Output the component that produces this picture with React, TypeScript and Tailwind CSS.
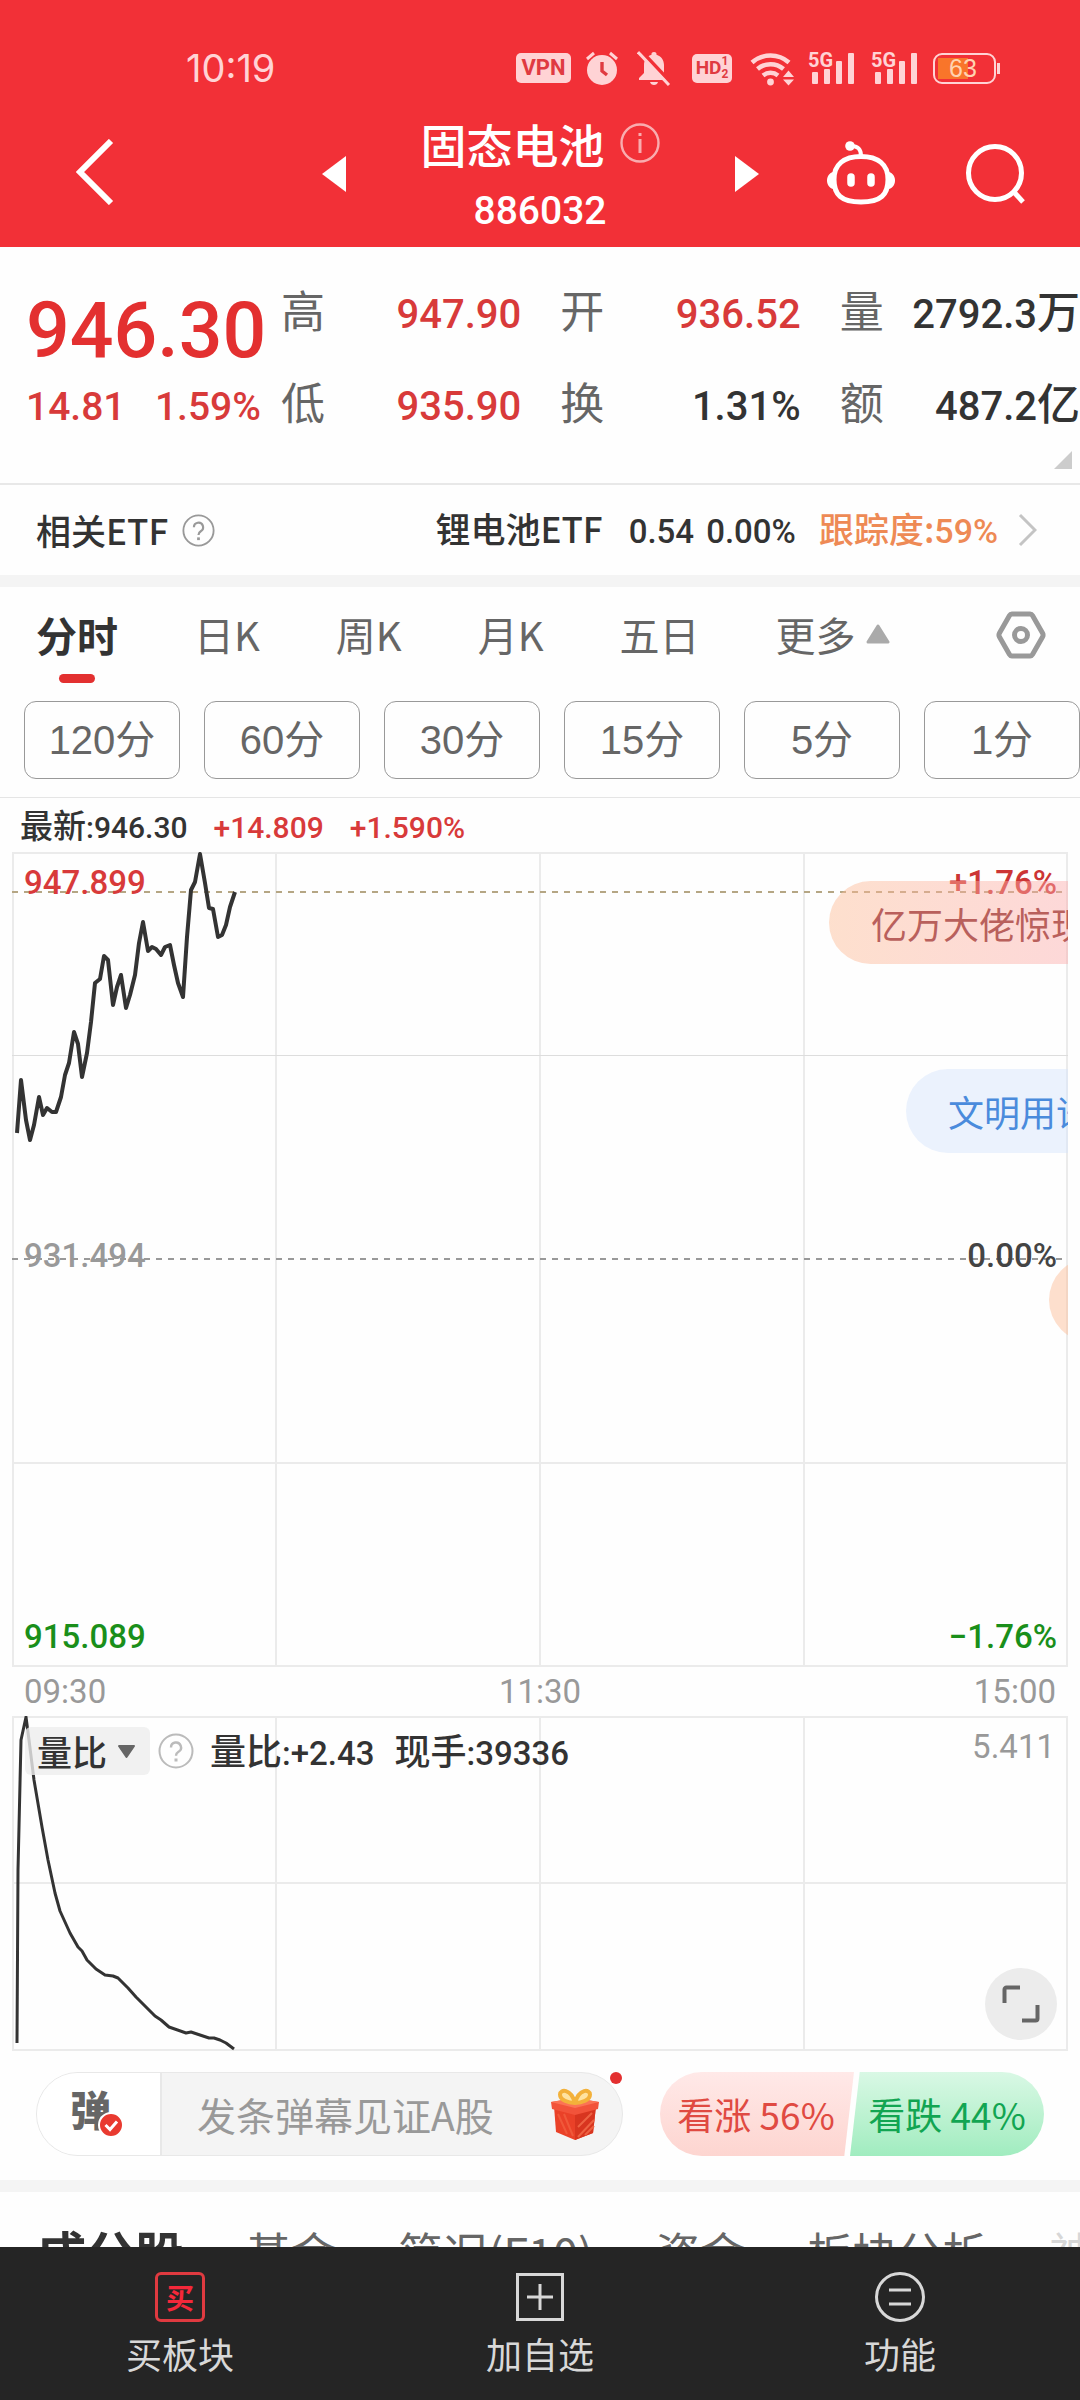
import React from "react";

const NUM = "font-['Roboto','Noto_Sans_CJK_SC',sans-serif]";

const PRICE_LINE =
  "5,281 9,228 14,268 18,288 22,273 27,245 31,263 35,256 40,260 44,260 49,245 53,223 57,211 62,180 66,192 70,225 75,201 79,170 83,131 88,127 92,104 96,108 101,153 105,135 109,123 114,156 118,143 123,123 127,91 131,70 136,99 140,95 144,97 149,103 153,95 158,93 162,113 166,131 171,145 175,85 179,38 183,30 188,2 193,31 197,56 201,57 206,85 210,83 214,73 218,55 223,40";

const VOLUME_LINE =
  "5,327 6,154 9,24 14,1 17,24 22,64 30,111 36,144 43,177 48,195 53,206 58,217 66,231 70,235 75,244 84,253 93,259 101,260 106,262 116,272 124,281 133,290 143,300 149,304 157,311 174,317 179,316 185,318 191,320 197,322 202,322 208,324 214,327 222,333";

const STATS = [
  [
    { label: "高", value: "947.90", unit: "", red: true },
    { label: "低", value: "935.90", unit: "", red: true },
  ],
  [
    { label: "开", value: "936.52", unit: "", red: true },
    { label: "换", value: "1.31%", unit: "", red: false },
  ],
  [
    { label: "量", value: "2792.3", unit: "万", red: false },
    { label: "额", value: "487.2", unit: "亿", red: false },
  ],
];

function Signal() {
  return (
    <svg width="48" height="46" viewBox="0 -6 48 46" fill="currentColor" aria-hidden="true">
      <text x="0" y="16" fontSize="20" fontWeight="700" fontFamily="Roboto, sans-serif">
        5G
      </text>
      <rect x="4" y="21" width="6" height="12" rx="1" />
      <rect x="16" y="18" width="6" height="15" rx="1" />
      <rect x="28" y="10" width="6" height="23" rx="1" />
      <rect x="40" y="2" width="6" height="31" rx="1" />
    </svg>
  );
}

function StatusBar() {
  return (
    <div className="flex h-[91px] items-end justify-between pr-[80px] pl-[186px] text-[#ffd3d5]">
      <span className="font-['Inter',sans-serif] text-[38px] leading-[46px]">10:19</span>
      <div className="flex h-[46px] items-center">
        <span className="flex h-[30px] w-[55px] items-center justify-center rounded-[5px] bg-[#ffd3d5] font-['Roboto',sans-serif] text-[22px] leading-[30px] font-bold text-[#e03a41]">
          VPN
        </span>
        <svg className="ml-[14px]" width="34" height="36" viewBox="0 0 34 36" fill="none" aria-hidden="true">
          <circle cx="17" cy="20" r="15" fill="currentColor" />
          <path d="M2 9 9 3M32 9 25 3" stroke="currentColor" strokeWidth="3" />
          <path d="M17 12v9l5 4" stroke="#e03a41" strokeWidth="3.4" />
        </svg>
        <svg className="ml-[18px]" width="34" height="36" viewBox="0 0 34 36" fill="none" aria-hidden="true">
          <path
            d="M17 2a2.500 2.500 0 0 0-2.500 2.800C9.500 6.300 7 10.200 7 15v8l-5 5v2h29v-2l-4-4v-9c0-4.800-2.800-8.700-7.500-10.200A2.500 2.500 0 0 0 17 2Z"
            fill="currentColor"
          />
          <path d="M13 32h8c-.5 2-2 3-4 3s-3.500-1-4-3Z" fill="currentColor" />
          <path d="M4 1 35 34" stroke="#f23037" strokeWidth="4" />
          <path d="M1 2 32 35" stroke="currentColor" strokeWidth="3" />
        </svg>
        <span className="ml-[21px] flex h-[29px] w-[40px] items-center justify-center rounded-[5px] bg-[#ffd3d5] font-['Roboto',sans-serif] text-[19px] leading-[28px] font-bold text-[#e03a41]">
          HD
          <span className="flex flex-col text-[12px] leading-[13px]">
            <span>1</span>
            <span>2</span>
          </span>
        </span>
        <svg className="ml-[18px]" width="46" height="36" viewBox="0 0 46 36" fill="none" aria-hidden="true">
          <g stroke="currentColor" strokeWidth="4.500">
            <path d="M2 12.500a28 28 0 0 1 37 0" />
            <path d="M7.500 19a20 20 0 0 1 26 0" />
            <path d="M13 25.500a12 12 0 0 1 15 0" />
          </g>
          <circle cx="20.500" cy="32" r="3.400" fill="currentColor" />
          <path d="M33 27h11l-5.500-6.500zM33 29.500h11l-5.500 6z" fill="currentColor" />
        </svg>
        <div className="ml-[12px] flex gap-[15px]">
          <Signal />
          <Signal />
        </div>
        <span className="ml-[14px] flex h-[31px] w-[63px] items-center rounded-[9px] border-[2px] border-[#ffd3d5] bg-[linear-gradient(90deg,#f9752a_0_56%,transparent_56%)] bg-[length:53px_21px] bg-[position:3px_3px] bg-no-repeat pl-[14px] font-['Liberation_Sans',sans-serif] text-[25px] leading-[27px] text-[#ffd3b0]">
          63
        </span>
        <span className="ml-[1px] h-[11px] w-[3px] bg-[#ffd3d5]" />
      </div>
    </div>
  );
}

function Header() {
  return (
    <header className="h-[247px] shrink-0 bg-[#f23037] text-white">
      <StatusBar />
      <div className="grid grid-cols-[1fr_437px_1fr] items-start pt-[22px]">
        <button type="button" aria-label="返回" className="mt-[26px] ml-[76px] w-[38px]">
          <svg width="38" height="66" viewBox="0 0 38 66" fill="none">
            <path d="M35 2 4 33l31 31" stroke="#fff" strokeWidth="6" />
          </svg>
        </button>
        <div className="flex items-start justify-between">
          <button type="button" aria-label="上一个" className="mt-[43px]">
            <svg width="24" height="36" viewBox="0 0 24 36">
              <path d="M24 0v36L0 18z" fill="#fff" />
            </svg>
          </button>
          <div className="flex flex-col items-center">
            <h1 className="flex items-center gap-[15px] text-[46px] leading-[60px] font-medium">
              固态电池
              <svg width="40" height="40" viewBox="0 0 40 40" fill="none" opacity="0.6" aria-hidden="true">
                <circle cx="20" cy="20" r="18.500" stroke="#fff" strokeWidth="2.400" />
                <path d="M20 16v14M20 10v3" stroke="#fff" strokeWidth="3" />
              </svg>
            </h1>
            <span className={`${NUM} mt-[10px] text-[39px] leading-[56px] font-medium`}>886032</span>
          </div>
          <button type="button" aria-label="下一个" className="mt-[43px]">
            <svg width="24" height="36" viewBox="0 0 24 36">
              <path d="M0 0v36l24-18z" fill="#fff" />
            </svg>
          </button>
        </div>
        <div className="mt-[28px] flex items-start justify-end gap-[68px] pr-[53px]">
          <button type="button" aria-label="智能助手">
            <svg width="72" height="64" viewBox="0 0 72 64" fill="none">
              <path
                d="M36 15.500c17 0 27 8 27 23s-7 22.500-27 22.500S9 53.500 9 38.500s10-23 27-23Z"
                stroke="#fff"
                strokeWidth="5"
              />
              <path d="M36 15c0-7-3-10-10-10" stroke="#fff" strokeWidth="4" />
              <circle cx="25" cy="5" r="4.800" fill="#fff" />
              <path d="M8 31c-8 2-8 15 0 17ZM64 31c8 2 8 15 0 17Z" fill="#fff" />
              <path d="M26 36v6M46 36v6" stroke="#fff" strokeWidth="7.500" strokeLinecap="round" />
            </svg>
          </button>
          <button type="button" aria-label="搜索" className="mt-[2px]">
            <svg width="62" height="62" viewBox="0 0 62 62" fill="none">
              <circle cx="30" cy="30" r="26.500" stroke="#fff" strokeWidth="5" />
              <path d="m48 48 10 11" stroke="#fff" strokeWidth="5" />
            </svg>
          </button>
        </div>
      </div>
    </header>
  );
}

function Quote() {
  return (
    <section className="relative flex h-[238px] shrink-0 items-start border-b-2 border-[#e8e8e8] pt-[34px]">
      <div className={`${NUM} w-[281px] shrink-0 pl-[26px] font-medium text-[#e33030]`}>
        <div className="text-[77px] leading-[100px]">946.30</div>
        <div className="flex justify-between pr-[20px] text-[39px] leading-[52px] text-[#d83a3a]">
          <span>14.81</span>
          <span>1.59%</span>
        </div>
      </div>
      <div className="grid flex-1 grid-cols-3 gap-[39px]">
        {STATS.map((column, i) => (
          <dl key={i} className="flex flex-col gap-[32px]">
            {column.map((s) => (
              <div key={s.label} className="flex h-[60px] items-baseline justify-between leading-[56px]">
                <dt className="text-[44px] text-[#666]">{s.label}</dt>
                <dd
                  className={
                    s.red
                      ? `${NUM} text-[40px] font-medium whitespace-nowrap text-[#d83a3a]`
                      : `${NUM} text-[40px] font-medium whitespace-nowrap text-[#333]`
                  }
                >
                  {s.value}
                  {s.unit && <span className="text-[43px]">{s.unit}</span>}
                </dd>
              </div>
            ))}
          </dl>
        ))}
      </div>
      <svg className="absolute right-[8px] bottom-[14px]" width="18" height="18" viewBox="0 0 18 18" aria-hidden="true">
        <path d="M18 0v18H0z" fill="#ccc" />
      </svg>
    </section>
  );
}

function Question({ size, color }: { size: number; color: string }) {
  return (
    <svg width={size} height={size} viewBox="0 0 36 36" fill="none" stroke={color} strokeWidth="2" aria-hidden="true">
      <circle cx="18" cy="18" r="16.500" />
      <path d="M13 14.500a5 5 0 1 1 7.500 4.300c-1.800 1.100-2.500 2-2.500 4" strokeWidth="2.400" />
      <path d="M18 25.500v3" strokeWidth="3" />
    </svg>
  );
}

function EtfRow() {
  return (
    <a
      href="#etf"
      className="flex h-[90px] shrink-0 items-center justify-between pr-[43px] pl-[36px] text-[35px] leading-[48px] font-medium text-[#333]"
    >
      <span className="flex items-center gap-[14px]">
        相关ETF
        <Question size={33} color="#999" />
      </span>
      <span className="flex items-baseline">
        锂电池ETF
        <span className={`${NUM} ml-[26px] text-[33px]`}>0.54</span>
        <span className={`${NUM} ml-[12px] text-[33px]`}>0.00%</span>
        <span className="ml-[23px] text-[#ee8a55]">
          跟踪度:<span className={`${NUM} text-[34px]`}>59%</span>
        </span>
        <svg className="ml-[20px] self-center" width="19" height="34" viewBox="0 0 19 34" fill="none" aria-hidden="true">
          <path d="m2 2 15 15L2 32" stroke="#c4c4c4" strokeWidth="3" />
        </svg>
      </span>
    </a>
  );
}

function PeriodTabs() {
  return (
    <nav className="shrink-0">
      <div className="flex h-[98px] items-start gap-[76px] pt-[19px] pr-[34px] pl-[36px] text-[40px] leading-[56px] text-[#666]">
        <button type="button" className="flex flex-col items-center text-[41px] font-bold text-[#333]">
          分时
          <span className="mt-[12px] h-[9px] w-[36px] rounded-full bg-[#e33030]" />
        </button>
        <button type="button">日K</button>
        <button type="button">周K</button>
        <button type="button">月K</button>
        <button type="button">五日</button>
        <button type="button" aria-expanded="true" className="flex items-center gap-[10px]">
          更多
          <svg width="24" height="20" viewBox="0 0 24 20" aria-hidden="true">
            <path d="M12 2 22 18H2Z" fill="#aaa" stroke="#aaa" strokeWidth="3" strokeLinejoin="round" />
          </svg>
        </button>
        <button type="button" aria-label="设置" className="mt-[4px] ml-auto">
          <svg width="50" height="50" viewBox="0 0 50 50" fill="none" stroke="#999" strokeWidth="5">
            <path d="M16 4h18a3 3 0 0 1 2.500 1.500l10 17.500a4 4 0 0 1 0 4l-10 17.500A3 3 0 0 1 34 46H16a3 3 0 0 1-2.500-1.500L3.500 27a4 4 0 0 1 0-4l10-17.500A3 3 0 0 1 16 4Z" />
            <circle cx="25" cy="25" r="6.500" />
          </svg>
        </button>
      </div>
      <div className="grid grid-cols-6 gap-[24px] border-b border-[#e5e5e5] pt-[16px] pb-[18px] pl-[24px]">
        {["120分", "60分", "30分", "15分", "5分", "1分"].map((p) => (
          <button
            key={p}
            type="button"
            className="h-[78px] rounded-[12px] border border-[#999] font-['Liberation_Sans','Noto_Sans_CJK_SC',sans-serif] text-[40px] leading-[56px] text-[#666]"
          >
            {p}
          </button>
        ))}
      </div>
    </nav>
  );
}

function PriceChart() {
  return (
    <div className={`${NUM} relative mx-[12px] h-[815px] shrink-0 overflow-hidden text-[33px] leading-[40px] font-medium`}>
      <svg className="block h-full w-full" viewBox="0 0 1056 815" preserveAspectRatio="none" fill="none" aria-hidden="true">
        <g stroke="#ebebeb" strokeWidth="2">
          <path d="M0 1h1056M0 814h1056M1 0v815M264 0v815M528 0v815M792 0v815M1055 0v815M0 611h1056" />
          <path d="M0 203.500h1056" strokeWidth="1" stroke="#ddd" />
        </g>
        <path d="M0 40h1056" stroke="#b5a684" strokeWidth="2" strokeDasharray="6 6" />
        <path d="M0 407h1056" stroke="#999" strokeWidth="2" strokeDasharray="6 6" />
        <polyline points={PRICE_LINE} stroke="#333" strokeWidth="4" strokeLinejoin="round" />
      </svg>
      <span className="absolute top-[11px] left-[12px] text-[#d83a3a]">947.899</span>
      <span className="absolute top-[11px] right-[11px] text-[#cc3535]">+1.76%</span>
      <span className="absolute top-[384px] left-[12px] text-[#999]">931.494</span>
      <span className="absolute top-[384px] right-[11px] text-[#444]">0.00%</span>
      <span className="absolute bottom-[10px] left-[12px] text-[#1a8f1a]">915.089</span>
      <span className="absolute right-[11px] bottom-[10px] text-[#1a8f1a]">−1.76%</span>
      <span className="absolute top-[29px] right-0 flex h-[83px] w-[239px] items-center overflow-hidden rounded-l-full bg-linear-to-r from-[#fdba92]/45 to-[#fcaaaa]/45 pl-[42px] font-['Noto_Sans_CJK_SC',sans-serif] text-[36px] font-normal whitespace-nowrap text-[#b9605c]">
        亿万大佬惊现
      </span>
      <span className="absolute top-[217px] right-0 flex h-[84px] w-[162px] items-center overflow-hidden rounded-l-full bg-[#d5e4fd]/45 pl-[42px] font-['Noto_Sans_CJK_SC',sans-serif] text-[36px] font-normal whitespace-nowrap text-[#4a8bdc]">
        文明用语
      </span>
      <span className="absolute top-[406px] -right-[220px] h-[84px] w-[239px] rounded-full bg-[#fdba92]/45" />
    </div>
  );
}

function VolumeChart() {
  return (
    <div className={`${NUM} relative mx-[12px] h-[335px] shrink-0`}>
      <svg className="block h-full w-full" viewBox="0 0 1056 335" preserveAspectRatio="none" fill="none" aria-hidden="true">
        <path
          d="M0 1h1056M0 334h1056M0 167h1056M1 0v335M264 0v335M528 0v335M792 0v335M1055 0v335"
          stroke="#ebebeb"
          strokeWidth="2"
        />
        <polyline points={VOLUME_LINE} stroke="#333" strokeWidth="3" strokeLinejoin="round" />
      </svg>
      <div className="absolute inset-x-0 top-[11px] flex h-[48px] items-center pl-[13px] text-[33px] leading-[48px] font-medium text-[#333]">
        <label className="relative flex items-center">
          <select
            aria-label="指标"
            className="h-[48px] w-[125px] appearance-none rounded-[6px] bg-[#eeeeee]/80 pl-[12px] font-['Noto_Sans_CJK_SC',sans-serif] text-[35px] leading-[48px] font-medium"
          >
            <option>量比</option>
          </select>
          <svg className="absolute right-[14px]" width="19" height="15" viewBox="0 0 19 15" aria-hidden="true">
            <path d="M2 2h15L9.500 13Z" fill="#666" stroke="#666" strokeWidth="2" strokeLinejoin="round" />
          </svg>
        </label>
        <span className="ml-[8px]">
          <Question size={36} color="#bbb" />
        </span>
        <span className="ml-[16px] flex gap-[20px] pt-[4px]">
          <span>
            <span className="text-[36px]">量比</span>:+2.43
          </span>
          <span>
            <span className="text-[36px]">现手</span>:39336
          </span>
        </span>
      </div>
      <span className="absolute top-[11px] right-[13px] text-[33px] leading-[40px] text-[#999]">5.411</span>
      <button
        type="button"
        aria-label="全屏"
        className="absolute right-[11px] bottom-[11px] flex h-[72px] w-[72px] items-center justify-center rounded-full bg-[#ececec]"
      >
        <svg width="38" height="38" viewBox="0 0 38 38" fill="none" stroke="#666" strokeWidth="4">
          <path d="M2.500 18V4.500a2 2 0 0 1 2-2H18M35.500 20v13.500a2 2 0 0 1-2 2H20" />
        </svg>
      </button>
    </div>
  );
}

function Gift() {
  return (
    <svg width="50" height="54" viewBox="0 0 50 54" fill="none" aria-hidden="true">
      <path d="M4 19h42l-3 27-18 7L6 45Z" fill="#ea4128" />
      <path d="M25 22 46 19l-3 27-18 7Z" fill="#d8351f" />
      <path d="m28 50 16-17M35 48l9-9M28 40l14-14" stroke="#ee6242" strokeWidth="2" />
      <path d="m8 27 9 20M14 27l9 22" stroke="#f0583a" strokeWidth="2" />
      <path d="M1 15 25 11l24 4-1 7-23 6-23-6Z" fill="#f2533a" />
      <path d="M1 15 25 11l24 4-24 6Z" fill="#fb7355" />
      <path
        d="M25 16c-7 0-15-3-15-8.500C10 2 21 1 25 16Zm0 0c7 0 15-3 15-8.500C40 2 29 1 25 16Z"
        stroke="#f3b13a"
        strokeWidth="4"
        fill="#ffe3a0"
      />
    </svg>
  );
}

function CommentBar() {
  return (
    <section className="flex shrink-0 items-center gap-[37px] pt-[21px] pr-[36px] pb-[24px] pl-[36px]">
      <div className="relative flex h-[84px] flex-1 items-stretch rounded-full border border-[#e8e8e8] bg-[#f4f4f4]">
        <button
          type="button"
          aria-pressed="true"
          aria-label="弹幕开关"
          className="relative w-[125px] rounded-l-full border-r-2 border-[#e8e8e8] bg-white pb-[12px] text-[41px] leading-[48px] font-black text-[#666]"
        >
          <span className="pr-[16px]">弹</span>
          <svg className="absolute top-[39px] left-[61px]" width="26" height="26" viewBox="0 0 26 26" fill="none" aria-hidden="true">
            <circle cx="13" cy="13" r="12" fill="#e93a30" stroke="#fff" strokeWidth="2" />
            <path d="m7.500 13 4.500 4.500 7-8" stroke="#fff" strokeWidth="3" />
          </svg>
        </button>
        <input
          type="text"
          aria-label="发弹幕"
          placeholder="发条弹幕见证A股"
          className="w-0 min-w-0 flex-1 bg-transparent pl-[35px] text-[39px] placeholder-[#999] outline-none"
        />
        <button type="button" aria-label="礼物" className="flex items-center pr-[22px]">
          <Gift />
        </button>
        <span className="absolute -top-px right-0 h-[12px] w-[12px] rounded-full bg-[#e33030]" />
      </div>
      <div className="flex h-[84px] w-[384px] text-[37px] leading-[48px]">
        <button
          type="button"
          className="-mr-[4px] w-[194px] rounded-l-full bg-linear-to-b from-[#ffe9e8] to-[#fdd5d0] pr-[2px] text-[#e04a42] [clip-path:polygon(0_0,100%_0,95%_100%,0_100%)]"
        >
          看涨 56%
        </button>
        <button
          type="button"
          className="w-[194px] rounded-r-full bg-linear-to-b from-[#d9f8e5] to-[#a0ecbf] text-[#12a552] [clip-path:polygon(5%_0,100%_0,100%_100%,0_100%)]"
        >
          看跌 44%
        </button>
      </div>
    </section>
  );
}

function DetailTabs() {
  return (
    <nav className="flex shrink-0 items-center gap-[62px] pt-[27px] pl-[37px] text-[45px] leading-[66px] whitespace-nowrap text-[#666]">
      <button type="button" className="text-[49px] font-bold text-[#333]">
        成分股
      </button>
      <button type="button">基金</button>
      <button type="button">简况(F10)</button>
      <button type="button">资金</button>
      <button type="button">板块分析</button>
      <button type="button" className="opacity-25">
        神奇
      </button>
    </nav>
  );
}

function BottomBar() {
  const item = "flex flex-1 flex-col items-center gap-[7px] pt-[25px]";
  return (
    <footer className="flex h-[153px] shrink-0 bg-[#252525] text-[36px] leading-[48px] text-[#d8d8d8]">
      <button type="button" className={item}>
        <span className="flex h-[50px] w-[50px] items-center justify-center rounded-[6px] border-[3px] border-[#e03a40] text-[28px] leading-[40px] font-bold text-[#f5283a]">
          买
        </span>
        买板块
      </button>
      <button type="button" className={item}>
        <svg width="50" height="50" viewBox="0 0 50 50" fill="none" stroke="currentColor" strokeWidth="3" aria-hidden="true">
          <path d="M2.500 2.500h45v45h-45zM25 12v26M12 25h26" />
        </svg>
        加自选
      </button>
      <button type="button" className={item}>
        <svg width="50" height="50" viewBox="0 0 50 50" fill="none" stroke="currentColor" strokeWidth="3" aria-hidden="true">
          <circle cx="25" cy="25" r="23.500" />
          <path d="M14 18h22M14 32h22" />
        </svg>
        功能
      </button>
    </footer>
  );
}

export default function App() {
  return (
    <div className="flex h-screen flex-col overflow-hidden bg-[#fefefe] font-['Noto_Sans_CJK_SC',sans-serif] text-[#333]">
      <Header />
      <main className="flex min-h-0 flex-1 flex-col overflow-hidden">
        <Quote />
        <EtfRow />
        <div className="h-[12px] shrink-0 bg-[#f4f4f4]" />
        <PeriodTabs />
        <div className={`${NUM} flex h-[54px] shrink-0 items-center gap-[26px] pt-[5px] pl-[20px] text-[30px] leading-[48px] font-medium`}>
          <span>
            <span className="text-[33px]">最新</span>:946.30
          </span>
          <span className="text-[#d83a3a]">+14.809</span>
          <span className="text-[#d83a3a]">+1.590%</span>
        </div>
        <PriceChart />
        <div className={`${NUM} grid h-[49px] shrink-0 grid-cols-3 items-center px-[24px] text-[33px] leading-[48px] text-[#999]`}>
          <span>09:30</span>
          <span className="text-center">11:30</span>
          <span className="text-right">15:00</span>
        </div>
        <VolumeChart />
        <CommentBar />
        <div className="h-[12px] shrink-0 bg-[#f4f4f4]" />
        <DetailTabs />
      </main>
      <BottomBar />
    </div>
  );
}
